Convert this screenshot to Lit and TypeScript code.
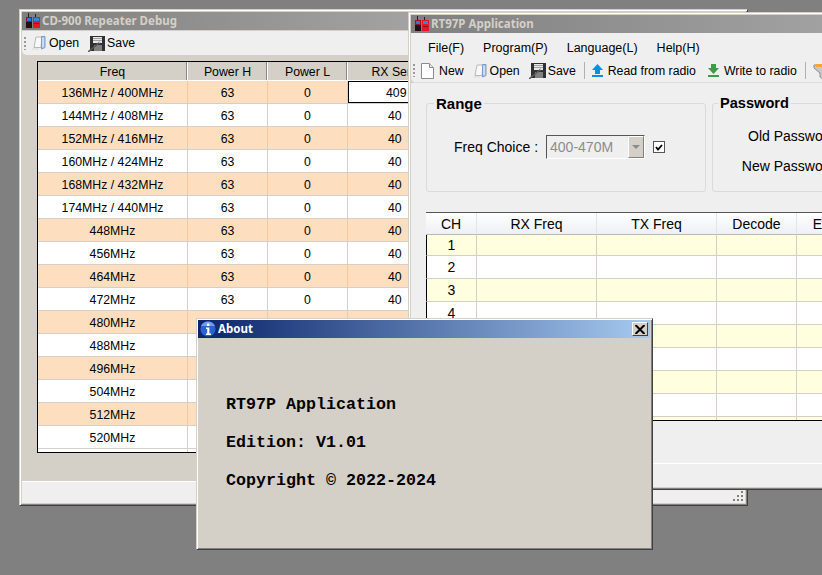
import { LitElement, html, css, svg } from 'lit';
import { customElement } from 'lit/decorators.js';

const FREQS = [
  '136MHz / 400MHz', '144MHz / 408MHz', '152MHz / 416MHz', '160MHz / 424MHz',
  '168MHz / 432MHz', '174MHz / 440MHz', '448MHz', '456MHz', '464MHz', '472MHz',
  '480MHz', '488MHz', '496MHz', '504MHz', '512MHz', '520MHz', '',
];
const CHANNELS = [1, 2, 3, 4, 5, 6, 7, 8, 9];

// toolbar and window icons, all hand drawn on a 16 grid
const radioIcon = html`<svg class="ico-title" viewBox="0 0 14 15">
  <path d="M2.5 0v5M9.5 1v4" stroke="#222" fill="none"/>
  <rect x="0" y="4" width="6" height="11" fill="#a01018"/>
  <rect x="0" y="9" width="6" height="6" fill="#201010"/>
  <rect x="1" y="5" width="4" height="3" fill="#2a7ad0"/>
  <rect x="7" y="4" width="7" height="11" fill="#e01828"/>
  <rect x="8" y="5" width="5" height="3" fill="#2a8ae0"/>
  <rect x="8" y="10" width="5" height="1" fill="#901018"/>
</svg>`;

const openIcon = html`<svg class="ico open" viewBox="0 0 15 16">
  <path d="M2 12.5 4 2h6L9 12.5z" fill="#f8f8f8" stroke="#b8b8b8"/>
  <path d="M9.5 1.5H13v11L9.5 14z" fill="#a8c8ec" stroke="#7c9cc4"/>
  <path d="M0 13h7v2H0z" fill="#e4e4e4"/>
  <path d="M10.5 3h1v9h-1z" fill="#e8f2fc"/>
</svg>`;

const saveIcon = html`<svg class="ico save" viewBox="0 0 17 17">
  <path d="M2 1h15v15H2z" fill="#303030"/>
  <path d="M5 2h9v6H5z" fill="#e8e8e8"/>
  <path d="M5 3.5h9M5 5.5h9" stroke="#a0a0a0"/>
  <path d="M6 10h8v6H6z" fill="#808080"/>
  <path d="M0 17 12 7" stroke="#585858" stroke-width="1.6"/>
  <path d="M11 8l2-1" stroke="#e0e0e0"/>
</svg>`;

const newIcon = html`<svg class="ico" viewBox="0 0 16 16">
  <path d="M.5.5h8l4 4v11H.5z" fill="#fff" stroke="#8c8c8c"/>
  <path d="M8.5.5v4h4" fill="#e0e0e0" stroke="#8c8c8c"/>
</svg>`;

const upIcon = html`<svg class="ico arrow" viewBox="0 0 11 13">
  <path d="M5.5 0 11 6H8v4H3V6H0z" fill="#0a90e0"/>
  <rect y="11" width="11" height="2" fill="#0a90e0"/>
</svg>`;

const downIcon = html`<svg class="ico arrow" viewBox="0 0 11 13">
  <path d="M5.5 10 11 4H8V0H3v4H0z" fill="#3c9c48"/>
  <rect y="11" width="11" height="2" fill="#3c9c48"/>
</svg>`;

const funnelIcon = html`<svg class="ico" viewBox="0 0 16 16">
  <path d="M1 2h14v3L10 10v6l-3-2v-4L1 5z" fill="#c8c8c8" stroke="#8c8c8c"/>
  <rect x="3" y="1" width="11" height="3" fill="#f0a830"/>
</svg>`;

const infoIcon = html`<svg class="ico-title info" viewBox="0 0 16 16">
  <circle cx="8" cy="8" r="7.6" fill="#2a62d0"/>
  <path d="M8 .4a7.6 7.6 0 0 0-7 4.6h14a7.6 7.6 0 0 0-7-4.6z" fill="#6c9cec"/>
  <rect x="7" y="2.5" width="2.4" height="2.4" fill="#fff"/>
  <path d="M6 6.5h3.4v6H11v1.4H6v-1.4h1.2V8H6z" fill="#fff"/>
</svg>`;

const gripDots = svg`<rect x="8" y="0" width="2" height="2"/><rect x="4" y="4" width="2" height="2"/><rect x="8" y="4" width="2" height="2"/><rect x="0" y="8" width="2" height="2"/><rect x="4" y="8" width="2" height="2"/><rect x="8" y="8" width="2" height="2"/>`;

@customElement('app-root')
export class AppRoot extends LitElement {
  static styles = css`
    :host {
      display: block;
      font-family: 'Liberation Sans', Arial, sans-serif;
      color: #000;
    }
    .desktop {
      position: relative;
      width: 822px;
      height: 575px;
      background: #808080;
      overflow: hidden;
    }

    /* windows sit on a free desktop, so these are absolute */
    .win {
      position: absolute;
      box-sizing: border-box;
      display: flex;
      flex-direction: column;
      background: #d4d0c8;
      padding: 2px;
      border: 1px solid;
      border-color: #d4d0c8 #404040 #404040 #d4d0c8;
      box-shadow: inset 1px 1px 0 #fff, inset -1px -1px 0 #808080;
    }
    .debug { left: 19px; top: 9px; width: 729px; height: 497px; }
    .app { left: 408px; top: 12px; width: 800px; height: 478px; }
    .about { left: 196px; top: 318px; width: 457px; height: 232px; padding: 1px 2px 2px 1px; }

    .title {
      flex: none;
      display: flex;
      align-items: center;
      height: 18px;
      padding: 0 0 1px 4px;
      box-sizing: border-box;
      gap: 2px;
      font: bold 11.5px 'Noto Sans', sans-serif;
      color: #d4d0c8;
      background: linear-gradient(90deg, #808080, #c0c0c0);
      white-space: nowrap;
    }
    .about .title {
      padding-left: 2px;
      color: #fff;
      background: linear-gradient(90deg, #0a246a, #a6caf0);
      position: relative;
    }
    .ico-title { width: 14px; height: 15px; flex: none; }
    .ico-title.info { width: 16px; height: 16px; }
    .close {
      position: absolute;
      right: 2px;
      top: 2px;
      width: 16px;
      height: 14px;
      box-sizing: border-box;
      background: #d4d0c8;
      border: 1px solid;
      border-color: #fff #404040 #404040 #fff;
      display: flex;
      align-items: center;
      justify-content: center;
    }
    .close svg { width: 10px; height: 9px; }

    .menu {
      flex: none;
      display: flex;
      gap: 19px;
      height: 26px;
      align-items: center;
      padding: 3px 0 0 17px;
      background: #efefef;
      font-size: 12.5px;
      box-sizing: border-box;
    }

    .toolbar {
      flex: none;
      display: flex;
      align-items: center;
      height: 24px;
      box-sizing: border-box;
      padding-left: 2px;
      background: #efefef;
      border-bottom-left-radius: 5px;
      font-size: 12.3px;
      white-space: nowrap;
    }
    .debug .toolbar { margin-top: 1px; }
    .app .toolbar { border-bottom: 1px solid #dcdcdc; }
    .tool-grip {
      width: 2px;
      height: 13px;
      margin-right: 6px;
      background: repeating-linear-gradient(180deg, #9a9a9a 0 2px, transparent 2px 4px);
    }
    .tool {
      display: flex;
      align-items: center;
      gap: 2px;
      margin-right: 9px;
    }
    .tool.wide { margin-right: 12px; }
    .ico { width: 16px; height: 16px; flex: none; }
    .ico.open { width: 15px; }
    .ico.save { width: 17px; height: 17px; }
    .ico.arrow { width: 11px; height: 13px; margin-right: 3px; }
    .tool-sep {
      width: 1px;
      height: 17px;
      background: #b0b0b0;
      margin: 0 7px 0 -1px;
    }

    .debug-body {
      flex: 1;
      min-height: 0;
      padding: 6px 0 0 15px;
    }
    .grid-frame {
      width: 690px;
      height: 392px;
      box-sizing: border-box;
      border: 1px solid #000;
      overflow: hidden;
      background: #fff;
    }
    table {
      border-collapse: separate;
      border-spacing: 0;
      table-layout: fixed;
    }
    .debug-grid { width: 689px; font-size: 12.3px; }
    .debug-grid th {
      height: 19px;
      padding: 2px 0 0;
      font-weight: normal;
      background: #d4d0c8;
      border-right: 1px solid #fff;
      border-bottom: 1px solid #fff;
      box-sizing: border-box;
      box-shadow: inset -1px 0 0 #8a8a8a;
      white-space: nowrap;
    }
    .debug-grid td {
      height: 23px;
      padding: 2px 0 0;
      box-sizing: border-box;
      text-align: center;
      border-right: 1px solid #d4d0c8;
      border-bottom: 1px solid #d4d0c8;
    }
    .debug-grid tr.odd td { background: #fddfc0; }
    .debug-grid td.rx { text-align: left; padding-left: 40px; }
    .debug-grid td.sel {
      padding-left: 38px;
      background: #fff !important;
      box-shadow: inset 0 0 0 1px #000;
    }

    .status {
      flex: none;
      height: 22px;
      box-sizing: border-box;
      background: #efefef;
      border-top: 1px solid #fff;
      display: flex;
      justify-content: flex-end;
      align-items: flex-end;
      padding: 0 2px 2px 0;
    }
    .status svg { width: 10px; height: 10px; fill: #808080; }
    .app .status { height: 24px; margin-left: -15px; }

    .app-body {
      flex: 1;
      min-height: 0;
      display: flex;
      flex-direction: column;
      background: #efefef;
      padding: 20px 0 0 15px;
    }
    .groups { display: flex; gap: 6px; height: 89px; flex: none; }
    fieldset {
      box-sizing: border-box;
      margin: -8px 0 0;
      min-width: 0;
      height: 97px;
      padding: 0;
      border: 1px solid #dadada;
      border-radius: 3px;
    }
    legend {
      margin-left: 7px;
      padding: 0 2px;
      font-weight: bold;
      font-size: 15px;
      line-height: 17px;
    }
    .range { width: 280px; }
    .password { width: 330px; }
    .password legend { margin-left: 5px; font-size: 14.6px; }
    .freq-row {
      display: flex;
      align-items: center;
      margin: 23px 0 0 27px;
      font-size: 14px;
    }
    .combo {
      margin-left: 8px;
      width: 99px;
      height: 24px;
      box-sizing: border-box;
      display: flex;
      align-items: center;
      justify-content: space-between;
      background: #efefef;
      border: 1px solid;
      border-color: #555 #fff #fff #555;
      font-size: 14px;
      color: #8c8c8c;
      padding-left: 3px;
    }
    .combo-btn {
      width: 16px;
      height: 22px;
      box-sizing: border-box;
      background: #d4d0c8;
      border: 1px solid;
      border-color: #fff #808080 #808080 #fff;
      display: flex;
      align-items: center;
      justify-content: center;
    }
    .combo-btn i {
      border-left: 4px solid transparent;
      border-right: 4px solid transparent;
      border-top: 4px solid #8c8c8c;
    }
    .check {
      margin-left: 8px;
      width: 12px;
      height: 12px;
      box-sizing: border-box;
      background: #fff;
      border: 1px solid #555;
      display: flex;
      align-items: center;
      justify-content: center;
    }
    .check svg { width: 8px; height: 7px; }
    .pw-rows {
      display: grid;
      grid-template-columns: 108px;
      row-gap: 13px;
      padding: 16px 0 0 22px;
      font-size: 14px;
      line-height: 17px;
      white-space: nowrap;
    }
    .pw-rows span { text-align: right; }

    .chan-frame {
      margin-top: 20px;
      width: 770px;
      height: 209px;
      flex: none;
      box-sizing: border-box;
      border-top: 1px solid #555;
      border-bottom: 1px solid #000;
      overflow: hidden;
      background: #fff;
    }
    .chan-grid { width: 770px; font-size: 14px; }
    .chan-grid th {
      height: 22px;
      padding: 0;
      box-sizing: border-box;
      font-weight: normal;
      background: linear-gradient(180deg, #fff, #eef0f4);
      border-right: 1px solid #e4e4e4;
      border-bottom: 1px solid #b8b8b8;
      white-space: nowrap;
    }
    .chan-grid td {
      height: 23px;
      padding: 0;
      box-sizing: border-box;
      text-align: center;
      border-right: 1px solid #d4d0c8;
      border-bottom: 1px solid #d4d0c8;
    }
    .chan-grid tr.first td { height: 21px; }
    .chan-grid tr.odd td { background: #ffffe0; }
    .chan-grid td:first-child { border-left: 1px solid #000; }
    .app-spacer { flex: 1; }

    .about-body {
      flex: 1;
      display: flex;
      flex-direction: column;
      gap: 18px;
      padding: 57px 0 0 28px;
      font: bold 16.67px/20px 'Liberation Mono', monospace;
      white-space: nowrap;
    }
  `;

  private debugWindow() {
    return html`
      <section class="win debug">
        <div class="title">${radioIcon}<span>CD-900 Repeater Debug</span></div>
        <div class="toolbar">
          <i class="tool-grip"></i>
          <span class="tool">${openIcon}Open</span>
          <span class="tool">${saveIcon}Save</span>
        </div>
        <div class="debug-body">
          <div class="grid-frame">
            <table class="debug-grid">
              <colgroup>
                <col style="width:150px" /><col style="width:80px" /><col style="width:80px" /><col style="width:110px" /><col />
              </colgroup>
              <thead>
                <tr><th>Freq</th><th>Power H</th><th>Power L</th><th>RX Serial 1</th><th></th></tr>
              </thead>
              <tbody>
                ${FREQS.map(
                  (f, i) => html`
                    <tr class="${i % 2 === 0 && f ? 'odd' : ''}">
                      <td>${f}</td>
                      <td>${f ? '63' : ''}</td>
                      <td>${f ? '0' : ''}</td>
                      <td class="rx ${i === 0 ? 'sel' : ''}">${!f ? '' : i === 0 ? '409' : '40'}</td>
                      <td></td>
                    </tr>
                  `
                )}
              </tbody>
            </table>
          </div>
        </div>
        <div class="status">
          <svg viewBox="0 0 10 10">${gripDots}</svg>
        </div>
      </section>
    `;
  }

  private appWindow() {
    return html`
      <section class="win app">
        <div class="title">${radioIcon}<span>RT97P Application</span></div>
        <nav class="menu">
          <span>File(F)</span><span>Program(P)</span><span>Language(L)</span><span>Help(H)</span>
        </nav>
        <div class="toolbar">
          <i class="tool-grip"></i>
          <span class="tool">${newIcon}New</span>
          <span class="tool">${openIcon}Open</span>
          <span class="tool">${saveIcon}Save</span>
          <i class="tool-sep"></i>
          <span class="tool wide">${upIcon}Read from radio</span>
          <span class="tool">${downIcon}Write to radio</span>
          <i class="tool-sep"></i>
          <span class="tool">${funnelIcon}</span>
        </div>
        <div class="app-body">
          <div class="groups">
            <fieldset class="range">
              <legend>Range</legend>
              <div class="freq-row">
                <span>Freq Choice :</span>
                <div class="combo">400-470M<span class="combo-btn"><i></i></span></div>
                <span class="check">
                  <svg viewBox="0 0 8 7"><path d="M1 3l2 2.5L7 1" fill="none" stroke="#000" stroke-width="1.8"/></svg>
                </span>
              </div>
            </fieldset>
            <fieldset class="password">
              <legend>Password</legend>
              <div class="pw-rows">
                <span>Old Password :</span>
                <span>New Password :</span>
              </div>
            </fieldset>
          </div>
          <div class="chan-frame">
            <table class="chan-grid">
              <colgroup>
                <col style="width:51px" /><col style="width:120px" /><col style="width:120px" /><col style="width:80px" /><col style="width:80px" /><col />
              </colgroup>
              <thead>
                <tr><th>CH</th><th>RX Freq</th><th>TX Freq</th><th>Decode</th><th>Encode</th><th></th></tr>
              </thead>
              <tbody>
                ${CHANNELS.map(
                  (n, i) => html`
                    <tr class="${i % 2 === 0 ? 'odd' : ''} ${i === 0 ? 'first' : ''}">
                      <td>${n}</td><td></td><td></td><td></td><td></td><td></td>
                    </tr>
                  `
                )}
              </tbody>
            </table>
          </div>
          <div class="app-spacer"></div>
          <div class="status"></div>
        </div>
      </section>
    `;
  }

  private aboutWindow() {
    return html`
      <section class="win about">
        <div class="title">
          ${infoIcon}<span>About</span>
          <span class="close">
            <svg viewBox="0 0 10 9"><path d="M.5 0l9 9M9.5 0l-9 9" stroke="#000" stroke-width="2" fill="none"/></svg>
          </span>
        </div>
        <div class="about-body">
          <span>RT97P Application</span>
          <span>Edition: V1.01</span>
          <span>Copyright © 2022-2024</span>
        </div>
      </section>
    `;
  }

  render() {
    return html`
      <div class="desktop">
        ${this.debugWindow()} ${this.appWindow()} ${this.aboutWindow()}
      </div>
    `;
  }
}

declare global {
  interface HTMLElementTagNameMap {
    'app-root': AppRoot;
  }
}
